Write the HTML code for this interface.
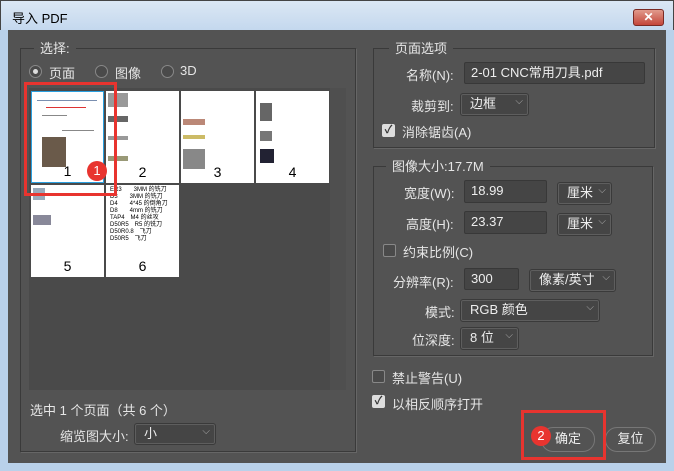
<!DOCTYPE html><html><head><meta charset="utf-8"><style>
*{box-sizing:border-box;margin:0;padding:0}
body{width:674px;height:471px;overflow:hidden;background:#b9d1ea;font-family:"Liberation Sans","Noto Sans CJK SC",sans-serif;font-size:13px;color:#e6e6e6;position:relative}
.a{position:absolute}
.title{left:0;top:0;width:674px;height:30px;background:linear-gradient(#dbe7f4,#c4d8ee);border:1px solid #444;border-bottom:none}
.title span{position:absolute;left:11px;top:7px;color:#000;font-size:13px}
.close{left:633px;top:9px;width:31px;height:17px;background:linear-gradient(#e19a8c,#c4463a);border:1px solid #7a2a24;border-radius:3px;color:#fff;font-weight:bold;font-size:12px;text-align:center;line-height:15px}
.main{left:8px;top:30px;width:658px;height:433px;background:#535353}
.grp{border:1px solid #3a3a3a;box-shadow:1px 1px 0 #666}
.lg{background:#535353;padding:0 6px}
.inp{background:#454545;border:1px solid #383838;border-radius:2px;color:#eee;padding-left:6px;line-height:20px;font-size:13px}
.sel{background:#454545;border:1px solid #3a3a3a;border-radius:3px;color:#eee;padding-left:9px;line-height:20px;font-size:13px;box-shadow:0 0 0 1px #5e5e5e inset}
.sel:after{content:"⌵";position:absolute;right:5px;top:-2px;font-size:10px;color:#aaa}
.cb{width:13px;height:13px;background:#ddd;border-radius:2px;color:#333;font-size:11px;line-height:13px;text-align:center;font-weight:bold}
.cbe{width:13px;height:13px;border:1px solid #888;border-radius:2px;background:#4a4a4a}
.rad{width:13px;height:13px;border-radius:50%;border:1px solid #888;background:#4a4a4a}
.th{background:#fff;width:73px;height:92px;color:#000;font-size:14px;text-align:center}
.th b{position:absolute;left:0;right:0;bottom:3px;font-weight:normal;text-align:center}
.ln{position:absolute;height:1px;background:#888}
.btn{border:1px solid #777;border-radius:12px;background:#535353;text-align:center;line-height:22px;color:#eee}
.red{border:3px solid #e8342f}
.badge{width:20px;height:20px;border-radius:50%;background:#e8342f;color:#fff;text-align:center;line-height:20px;font-size:13px}
</style></head><body>
<div class="a title"><span>导入 PDF</span></div>
<div class="a close">✕</div>
<div class="a main"></div>
<div class="a grp" style="left:20px;top:48px;width:336px;height:404px"></div>
<div class="a lg" style="left:34px;top:38px">选择:</div>
<div class="a rad" style="left:29px;top:65px;background:#4a4a4a"><div class="a" style="left:3px;top:3px;width:5px;height:5px;border-radius:50%;background:#ddd"></div></div>
<div class="a" style="left:49px;top:63px">页面</div>
<div class="a rad" style="left:95px;top:65px"></div>
<div class="a" style="left:115px;top:63px">图像</div>
<div class="a rad" style="left:161px;top:65px"></div>
<div class="a" style="left:180px;top:63px">3D</div>
<div class="a" style="left:29px;top:88px;width:317px;height:302px;background:#4a4a4a"></div>
<div class="a" style="left:330px;top:88px;width:16px;height:302px;background:#4f4f4f"></div>
<div class="a th" style="left:31px;top:91px;border:1px solid #2aa0e0"><div class="ln" style="left:5px;width:60px;top:8px;background:#7a8fb0"></div><div class="ln" style="left:14px;width:40px;top:15px;background:#d33"></div><div class="a" style="left:10px;top:45px;width:24px;height:30px;background:#6a5a4a"></div><div class="ln" style="left:10px;width:25px;top:23px"></div><div class="ln" style="left:30px;width:32px;top:38px"></div><b>1</b></div>
<div class="a th" style="left:106px;top:91px"><div class="a" style="left:2px;top:2px;width:20px;height:14px;background:#999"></div><div class="a" style="left:2px;top:25px;width:20px;height:6px;background:#666"></div><div class="a" style="left:2px;top:45px;width:20px;height:4px;background:#999"></div><div class="a" style="left:2px;top:65px;width:20px;height:5px;background:#997"></div><b>2</b></div>
<div class="a th" style="left:181px;top:91px"><div class="a" style="left:2px;top:28px;width:22px;height:6px;background:#b87"></div><div class="a" style="left:2px;top:44px;width:22px;height:4px;background:#cb6"></div><div class="a" style="left:2px;top:58px;width:22px;height:20px;background:#888"></div><b>3</b></div>
<div class="a th" style="left:256px;top:91px"><div class="a" style="left:4px;top:12px;width:12px;height:18px;background:#666"></div><div class="a" style="left:4px;top:40px;width:12px;height:10px;background:#777"></div><div class="a" style="left:4px;top:58px;width:14px;height:14px;background:#223"></div><b>4</b></div>
<div class="a th" style="left:31px;top:185px"><div class="a" style="left:2px;top:3px;width:12px;height:12px;background:#9ab"></div><div class="a" style="left:2px;top:30px;width:18px;height:10px;background:#889"></div><b>5</b></div>
<div class="a th" style="left:106px;top:185px"><div class="a" style="left:4px;top:2px;font-size:6px;text-align:left;line-height:7px;white-space:nowrap">ER3　　3MM 的铣刀<br>D3　　3MM 的铣刀<br>D4　　4*45 的倒角刀<br>D8　　4mm 的铣刀<br>TAP4　M4 的丝攻<br>D50R5　R5 的铣刀<br>D50R0.8　飞刀<br>D50R5　飞刀</div><b>6</b></div>
<div class="a red" style="left:24px;top:82px;width:93px;height:114px"></div>
<div class="a badge" style="left:87px;top:161px">1</div>
<div class="a" style="left:30px;top:400px">选中 1 个页面（共 6 个）</div>
<div class="a" style="left:60px;top:426px">缩览图大小:</div>
<div class="a sel" style="left:134px;top:423px;width:82px;height:22px">小</div>
<div class="a grp" style="left:373px;top:48px;width:282px;height:100px"></div>
<div class="a lg" style="left:389px;top:38px">页面选项</div>
<div class="a" style="left:406px;top:65px">名称(N):</div>
<div class="a inp" style="left:464px;top:62px;width:181px;height:22px">2-01 CNC常用刀具.pdf</div>
<div class="a" style="left:411px;top:96px">裁剪到:</div>
<div class="a sel" style="left:460px;top:93px;width:69px;height:23px">边框</div>
<div class="a cb" style="left:382px;top:124px">✓</div>
<div class="a" style="left:402px;top:122px">消除锯齿(A)</div>
<div class="a grp" style="left:373px;top:166px;width:280px;height:190px"></div>
<div class="a lg" style="left:386px;top:156px">图像大小:17.7M</div>
<div class="a" style="left:404px;top:183px">宽度(W):</div>
<div class="a inp" style="left:464px;top:180px;width:83px;height:23px">18.99</div>
<div class="a sel" style="left:557px;top:182px;width:55px;height:23px">厘米</div>
<div class="a" style="left:406px;top:214px">高度(H):</div>
<div class="a inp" style="left:464px;top:211px;width:83px;height:23px">23.37</div>
<div class="a sel" style="left:557px;top:213px;width:55px;height:23px">厘米</div>
<div class="a cbe" style="left:383px;top:244px"></div>
<div class="a" style="left:403px;top:242px">约束比例(C)</div>
<div class="a" style="left:393px;top:272px">分辨率(R):</div>
<div class="a inp" style="left:464px;top:268px;width:55px;height:22px">300</div>
<div class="a sel" style="left:529px;top:269px;width:87px;height:23px">像素/英寸</div>
<div class="a" style="left:425px;top:302px">模式:</div>
<div class="a sel" style="left:460px;top:299px;width:140px;height:23px">RGB 颜色</div>
<div class="a" style="left:412px;top:330px">位深度:</div>
<div class="a sel" style="left:460px;top:327px;width:59px;height:23px">8 位</div>
<div class="a cbe" style="left:372px;top:370px"></div>
<div class="a" style="left:392px;top:368px">禁止警告(U)</div>
<div class="a cb" style="left:372px;top:395px">✓</div>
<div class="a" style="left:392px;top:394px">以相反顺序打开</div>
<div class="a btn" style="left:541px;top:427px;width:54px;height:25px">确定</div>
<div class="a btn" style="left:605px;top:427px;width:51px;height:25px">复位</div>
<div class="a red" style="left:521px;top:410px;width:85px;height:50px"></div>
<div class="a badge" style="left:531px;top:426px">2</div>
</body></html>
